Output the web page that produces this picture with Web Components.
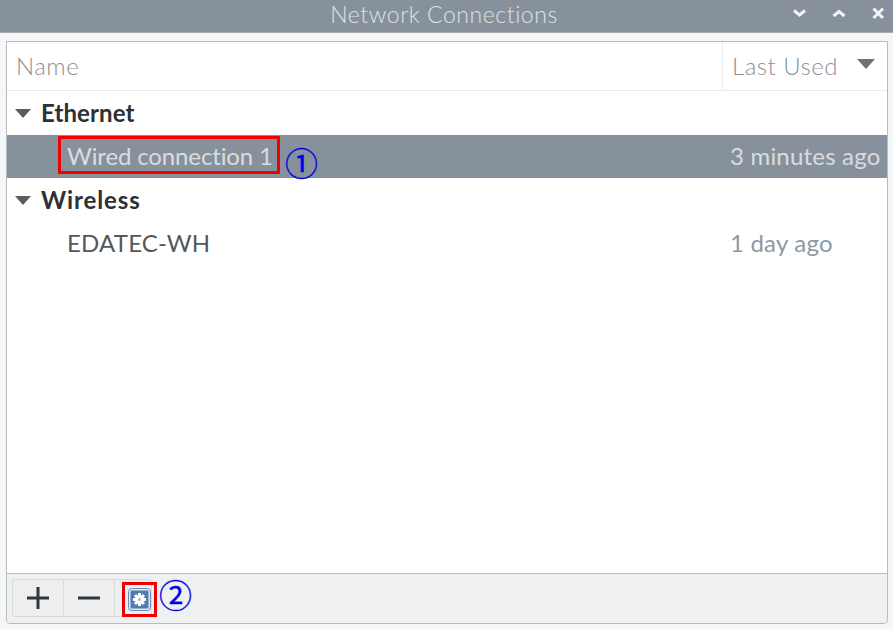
<!DOCTYPE html>
<html>
<head>
<meta charset="utf-8">
<title>Network Connections</title>
<style>
  html, body { margin: 0; padding: 0; height: 100%; background: #f5f6f7; overflow: hidden; }
  body { font-family: Lato, "Noto Sans", sans-serif; font-variant-ligatures: none; }
</style>
</head>
<body>
<nm-window>
  <nm-titlebar slot="title">Network Connections</nm-titlebar>
  <nm-header slot="header"></nm-header>
  <nm-group label="Ethernet"></nm-group>
  <nm-row name="Wired connection 1" used="3 minutes ago" selected mark="①"></nm-row>
  <nm-group label="Wireless" style="letter-spacing:.9px"></nm-group>
  <nm-row name="EDATEC-WH" used="1 day ago"></nm-row>
  <nm-toolbar slot="footer"></nm-toolbar>
</nm-window>

<script>
class NmWindow extends HTMLElement {
    connectedCallback() {
        this.attachShadow({ mode: 'open' });
        this.shadowRoot.innerHTML = `
  <style>
    :host { display: flex; flex-direction: column; width: 893px; height: 629px; }
    .frame {
      flex: 1;
      display: flex;
      flex-direction: column;
      margin: 8px 5px 5px 6px;
      border: 1px solid #b9bcbc;
      border-radius: 0 0 4px 4px;
      background: #fff;
      min-height: 0;
    }
    .list { flex: 1; min-height: 0; }
  </style>
  <slot name="title"></slot>
  <div class="frame">
    <slot name="header"></slot>
    <div class="list"><slot></slot></div>
    <slot name="footer"></slot>
  </div>
        `;
    }
}

class NmTitlebar extends HTMLElement {
    connectedCallback() {
        this.attachShadow({ mode: 'open' });
        this.shadowRoot.innerHTML = `
  <style>
    :host {
      display: flex;
      align-items: center;
      justify-content: center;
      position: relative;
      flex: none;
      height: 24px;
      line-height: 24px;
      padding: 2px 5px 6px 0;
      background: #87919b;
      border-bottom: 1px solid #a3a9ae;
      color: #dfe2e5;
      font-size: 23px;
      font-weight: 300;
      letter-spacing: .55px;
    }
    .buttons { position: absolute; right: 0; top: 0; display: flex; }
    .buttons svg { display: block; }
  </style>
  <slot></slot>
  <div class="buttons">
    <svg width="109" height="28" viewBox="0 0 109 28" fill="none" stroke="#f2f3f4" stroke-width="3">
      <path d="M10 10.500l5.500 4.500 5.500-4.500"/>
      <path d="M49.500 16l5.500-4.500 5.500 4.500"/>
      <path d="M89.500 8.500l9.500 9.500M99 8.500l-9.500 9.500"/>
    </svg>
  </div>
        `;
    }
}

class NmHeader extends HTMLElement {
    connectedCallback() {
        this.attachShadow({ mode: 'open' });
        this.shadowRoot.innerHTML = `
  <style>
    :host {
      display: grid;
      grid-template-columns: 1fr 165px;
      height: 48px;
      border-bottom: 1px solid #e9eaea;
      color: #8e9092;
      font-size: 24px;
      font-weight: 300;
      letter-spacing: .5px;
    }
    .col { display: flex; align-items: center; padding-left: 9px; padding-bottom: 2px; }
    .col + .col { border-left: 1px solid #e9eaea; justify-content: space-between; padding-right: 12px; }
    svg { display: block; margin-top: -3px; }
  </style>
  <div class="col">Name</div>
  <div class="col">Last Used
    <svg width="18" height="10" viewBox="0 0 18 10"><path d="M0 0h18l-9 10z" fill="#6f7275"/></svg>
  </div>
        `;
    }
}

class NmGroup extends HTMLElement {
    connectedCallback() {
        this.attachShadow({ mode: 'open' });
        this.shadowRoot.innerHTML = `
  <style>
    :host {
      display: flex;
      align-items: center;
      gap: 10px;
      height: 44px;
      padding-left: 8px;
      color: #2e3133;
      font-size: 24px;
      font-weight: 700;
      letter-spacing: .1px;
    }
    span { padding-bottom: 2px; }
    svg { display: block; flex: none; }
  </style>
  <svg width="16" height="9" viewBox="0 0 16 9"><path d="M0 0h16l-8 9z" fill="#5a5d60"/></svg>
  <span></span>
        `;
        this.shadowRoot.querySelector('span').textContent = this.getAttribute('label');
    }
}

class NmRow extends HTMLElement {
    connectedCallback() {
        const selected = this.hasAttribute('selected');
        const mark = this.getAttribute('mark');
        this.attachShadow({ mode: 'open' });
        this.shadowRoot.innerHTML = `
  <style>
    :host {
      display: flex;
      align-items: center;
      justify-content: space-between;
      height: 43px;
      padding-left: 60px;
      font-size: 24px;
      letter-spacing: .2px;
      color: #55585b;
    }
    :host([selected]) { background: #87919b; color: #d9dde0; }
    .name { position: relative; top: -1px; }
    :host([selected]) .name { letter-spacing: -.13px; }
    .used { position: relative; top: -1px; width: 157px; color: #8b98a6; white-space: nowrap; }
    :host([selected]) .used { color: #d9dde0; }
    .box {
      position: absolute;
      left: -9px; right: -7px; top: -5px; bottom: -4px;
      border: 3px solid #f00000;
    }
    .mark {
      position: absolute;
      left: calc(100% + 12px);
      top: -1px;
      color: #0000e6;
      font-family: "Noto Sans CJK JP", sans-serif;
      font-size: 33px;
      -webkit-text-stroke: .3px #0000e6;
      letter-spacing: 0;
      line-height: 44px;
      white-space: nowrap;
    }
  </style>
  <span class="name"></span>
  <span class="used"></span>
        `;
        const name = this.shadowRoot.querySelector('.name');
        name.textContent = this.getAttribute('name');
        this.shadowRoot.querySelector('.used').textContent = this.getAttribute('used');
        if (selected) {
            const box = document.createElement('span');
            box.className = 'box';
            name.append(box);
        }
        if (mark) {
            const m = document.createElement('span');
            m.className = 'mark';
            m.textContent = mark;
            name.append(m);
        }
    }
}

class NmToolbar extends HTMLElement {
    connectedCallback() {
        this.attachShadow({ mode: 'open' });
        this.shadowRoot.innerHTML = `
  <style>
    :host {
      display: flex;
      align-items: flex-start;
      height: 44px;
      padding: 5px 0 0 5px;
      background: #eef0f2;
      border-top: 1px solid #b9bcbc;
      border-radius: 0 0 4px 4px;
    }
    .group {
      display: flex;
      height: 36px;
      border: 1px solid #d8dadc;
      border-radius: 3px;
      background: #eceef0;
    }
    .btn {
      width: 50px;
      display: flex;
      align-items: center;
      justify-content: center;
      position: relative;
    }
    .btn + .btn { border-left: 1px solid #d8dadc; }
    svg { display: block; }
    .box {
      position: absolute;
      left: 7px; top: 2px;
      width: 29px; height: 29px;
      border: 3px solid #f00000;
      display: flex; align-items: center; justify-content: center;
    }
    .mark {
      position: absolute;
      left: 44px;
      top: -8px;
      color: #0000e6;
      font-family: "Noto Sans CJK JP", sans-serif;
      font-size: 33px;
      -webkit-text-stroke: .3px #0000e6;
      line-height: 44px;
    }
  </style>
  <div class="group">
    <div class="btn">
      <svg width="22" height="22" viewBox="0 0 22 22"><path d="M11 0v22M0 11h22" stroke="#34373a" stroke-width="3" fill="none"/></svg>
    </div>
    <div class="btn">
      <svg width="22" height="22" viewBox="0 0 22 22"><path d="M0 11h22" stroke="#34373a" stroke-width="3" fill="none"/></svg>
    </div>
    <div class="btn" style="width:36px">
      <div class="box">
        <svg width="23" height="23" viewBox="0 0 23 23">
          <rect x="0.500" y="0.500" width="22" height="22" rx="3" fill="#dfe7f1" stroke="#6f8db4"/>
          <rect x="2.500" y="2.500" width="18" height="18" rx="1" fill="#4f7cb3"/>
          <g stroke="#fff" stroke-width="3">
            <path d="M11.500 5v13M5 11.500h13M7 7l9 9M16 7l-9 9"/>
          </g>
          <circle cx="11.500" cy="11.500" r="4.500" fill="#fff"/>
          <circle cx="11.500" cy="11.500" r="1.500" fill="#9db6d3"/>
        </svg>
      </div>
      <span class="mark">②</span>
    </div>
  </div>
        `;
    }
}

customElements.define('nm-window', NmWindow);
customElements.define('nm-titlebar', NmTitlebar);
customElements.define('nm-header', NmHeader);
customElements.define('nm-group', NmGroup);
customElements.define('nm-row', NmRow);
customElements.define('nm-toolbar', NmToolbar);
</script>
</body>
</html>
